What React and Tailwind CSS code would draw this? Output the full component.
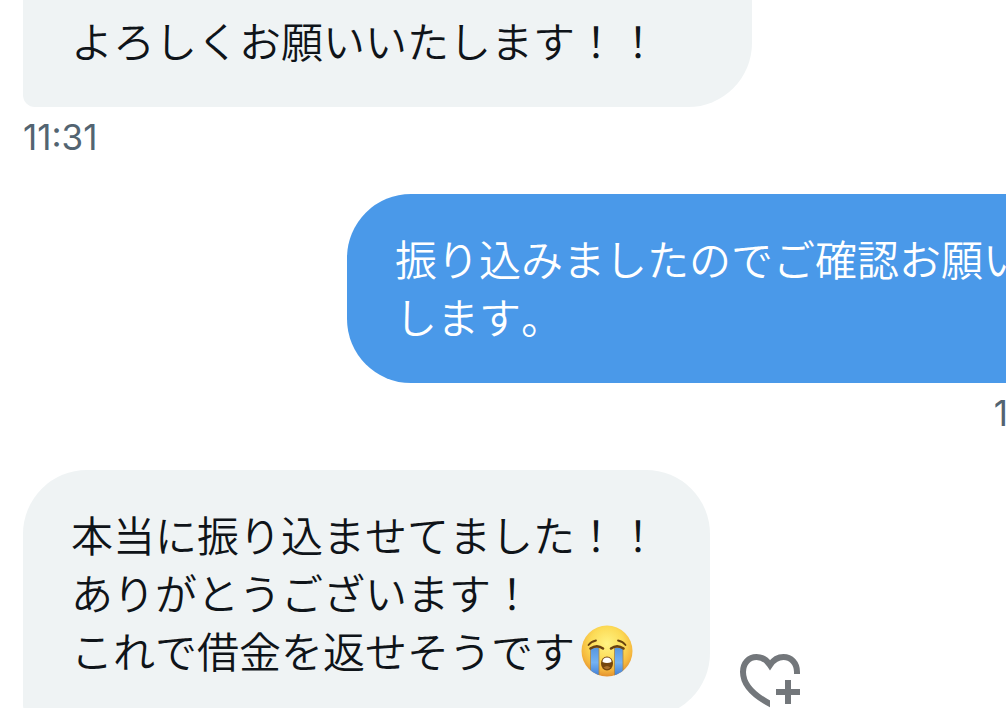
import React from "react";

const CryingFace = () => (
  <svg viewBox="0 0 52 52" role="img" aria-label="😭" className="mt-[2px] ml-[6px] inline-block h-[52px] w-[52px]">
    <defs>
      <radialGradient id="face" cx="0.5" cy="0.36" r="0.66">
        <stop offset="0" stopColor="#fff383" />
        <stop offset="0.5" stopColor="#fcdb56" />
        <stop offset="0.78" stopColor="#f5b73e" />
        <stop offset="1" stopColor="#e08a2c" />
      </radialGradient>
      <linearGradient id="tear" x1="0" y1="0" x2="0" y2="1">
        <stop offset="0" stopColor="#5796e0" />
        <stop offset="0.5" stopColor="#74b2f2" />
        <stop offset="1" stopColor="#3a78d2" />
      </linearGradient>
      <clipPath id="faceClip">
        <circle cx="26" cy="26" r="25.5" />
      </clipPath>
    </defs>
    <circle cx="26" cy="26" r="25.5" fill="url(#face)" />
    <g clipPath="url(#faceClip)">
      <path d="M9.5 22.5h8.5v30H9.5z" fill="url(#tear)" stroke="#a98442" strokeWidth="0.8" />
      <path d="M33.500 22.500h8.500v30h-8.500z" fill="url(#tear)" stroke="#a98442" strokeWidth="0.8" />
    </g>
    <g fill="none" stroke="#6b4310" strokeLinecap="round">
      <path d="M7.500 20Q10 16.500 15 15.500M44.500 20Q42 16.500 37 15.500" strokeWidth="1.800" />
      <path d="M9.500 23.500Q16 19 22 23.500M30 23.500Q36 19 42.500 23.500" strokeWidth="2.600" />
    </g>
    <ellipse cx="26" cy="38.500" rx="6" ry="7" fill="#74460f" />
    <path d="M21.500 37Q21.500 32.500 26 32.500T30.500 37Q26 39 21.500 37z" fill="#fff" />
    <path d="M22.500 42.500Q26 39.500 29.500 42.500Q26 46 22.500 42.500z" fill="#a9702c" />
  </svg>
);

const HeartPlus = () => (
  <svg viewBox="0 0 66 60" fill="none" stroke="#73777b" strokeWidth="6" className="h-[60px] w-[66px]">
    <defs>
      <clipPath id="heartCut">
        <path d="M0 0H66V23H33V60H0z" />
      </clipPath>
    </defs>
    <path
      clipPath="url(#heartCut)"
      d="M60 24v-3C60 12 54 6 46.5 6C40 6 36 9.5 33 14C30 9.5 26 6 19.5 6C12 6 6 12 6 21C6 32 15 44 36 54.5"
    />
    <path d="M39 41H63M51 29V53" />
  </svg>
);

const Bubble = ({ className, children }) => (
  <div className={`w-max pl-12 pr-[51px] pb-[38px] text-[42px] leading-[58px] ${className}`}>{children}</div>
);

const Time = ({ className = "", children }) => (
  <p className={`mt-3 mb-[39px] font-['Inter',sans-serif] text-[35px] leading-9 font-normal text-[#536471] ${className}`}>
    {children}
  </p>
);

const App = () => {
  return (
    <main
      lang="ja"
      className="h-screen overflow-hidden bg-white pl-[23px] font-['Noto_Sans_CJK_JP',sans-serif] font-[350] whitespace-nowrap text-[#0f1419] [font-kerning:none]"
    >
      <Bubble className="min-w-[729px] rounded-br-[64px] rounded-bl-xl bg-[#eff3f4] pt-[11px]">
        <p>よろしくお願いいたします！！</p>
      </Bubble>
      <Time>11:31</Time>

      <div className="ml-[324px] w-max">
        <Bubble className="rounded-l-[64px] rounded-tr-[64px] bg-[#4a99e9] pt-[35px] text-white">
          <p>振り込みましたのでご確認お願い</p>
          <p>します。</p>
        </Bubble>
        <Time className="pr-[68px] text-right">1</Time>
      </div>

      <div className="flex items-end">
        <Bubble className="rounded-t-[64px] rounded-br-[64px] rounded-bl-xl bg-[#eff3f4] pt-[35px]">
          <p>本当に振り込ませてました！！</p>
          <p>ありがとうございます！</p>
          <p className="flex items-center">
            これで借金を返せそうです
            <CryingFace />
          </p>
        </Bubble>
        <button type="button" aria-label="リアクションを追加" className="mb-[6px] ml-[27px]">
          <HeartPlus />
        </button>
      </div>
    </main>
  );
};

export default App;
